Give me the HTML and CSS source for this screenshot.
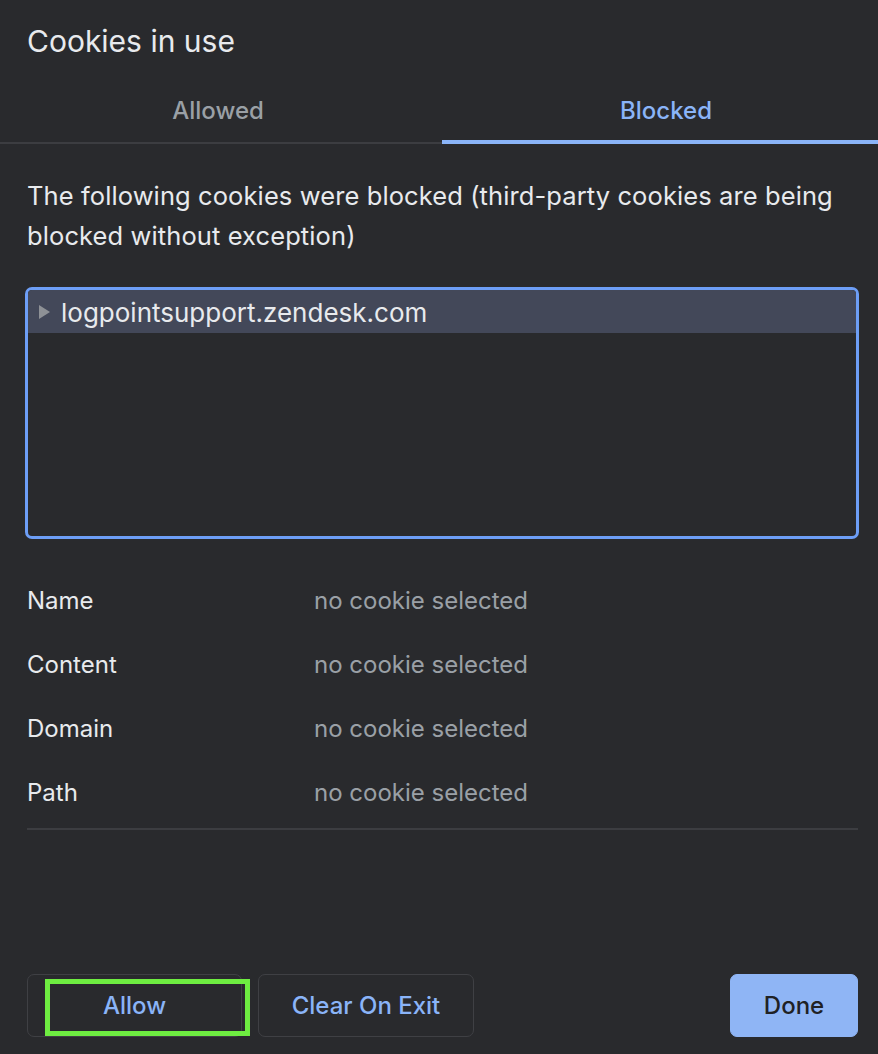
FILE: index.html
```html
<!DOCTYPE html>
<html lang="en">
<head>
<meta charset="utf-8">
<title>Cookies in use</title>
<link rel="stylesheet" href="styles.css">
</head>
<body>
<div class="dialog">
  <h1 class="title">Cookies in use</h1>
  <div class="tabs">
    <div class="tab tab-first">Allowed</div>
    <div class="tab tab-second active">Blocked</div>
  </div>
  <p class="desc">The following cookies were blocked (third-party cookies are being blocked without exception)</p>
  <div class="tree">
    <div class="tree-row">
      <svg class="caret" width="11" height="14" viewBox="0 0 11 14"><path d="M0 0 L11 7 L0 14 Z" fill="#8e9196"/></svg>
      <span>logpointsupport.zendesk.com</span>
    </div>
  </div>
  <div class="details">
    <div class="label">Name</div><div class="value">no cookie selected</div>
    <div class="label">Content</div><div class="value">no cookie selected</div>
    <div class="label">Domain</div><div class="value">no cookie selected</div>
    <div class="label">Path</div><div class="value">no cookie selected</div>
  </div>
  <div class="separator"></div>
  <div class="footer">
    <div class="left-buttons">
      <button class="btn btn-allow">Allow<span class="focus-box"></span></button>
      <button class="btn btn-clear">Clear On Exit</button>
    </div>
    <button class="btn btn-done">Done</button>
  </div>
</div>
</body>
</html>
```

FILE: styles.css
```css
* { box-sizing: border-box; }
html, body {
  margin: 0;
  padding: 0;
  background: #292a2d;
}
body {
  font-family: "Inter", "Noto Sans", sans-serif;
  color: #e8eaed;
}
.dialog {
  width: 878px;
  height: 1054px;
  display: flex;
  flex-direction: column;
}
.title {
  margin: 0;
  padding: 23px 0 13px 27px;
  font-size: 30px;
  line-height: 36px;
  font-weight: 400;
  color: #e8eaed;
}
.tabs {
  display: grid;
  grid-template-columns: 442px 1fr;
}
.tab {
  padding: 24px 0 18px;
  font-size: 24px;
  line-height: 30px;
  font-weight: 500;
  text-align: center;
  color: #9aa0a6;
  box-shadow: inset 0 -2px 0 #3c3d41;
}
.tab-first { padding-right: 6px; }
.tab-second { padding-left: 12px; }
.tab.active {
  color: #8ab4f8;
  box-shadow: inset 0 -4px 0 #8ab4f8;
}
.desc {
  margin: 32px 20px 0 27px;
  font-size: 25.5px;
  line-height: 40px;
  letter-spacing: 0.1px;
}
.tree {
  margin: 31px 19px 0 25px;
  height: 252px;
  border: 3px solid #6d9ef6;
  border-radius: 7px;
  overflow: hidden;
}
.tree-row {
  height: 43px;
  padding-top: 2px;
  background: #434859;
  display: flex;
  align-items: center;
  gap: 11px;
  padding-left: 11px;
  font-size: 26px;
  line-height: 41px;
  color: #e8eaed;
}
.caret { flex: none; margin-top: -2px; }
.details {
  margin: 30px 20px 0 27px;
  display: grid;
  grid-template-columns: 287px 1fr;
  grid-auto-rows: 64px;
  align-items: center;
  font-size: 24px;
  line-height: 30px;
}
.label { color: #e8eaed; }
.value { color: #9aa0a6; }
.separator {
  margin: 3px 20px 0 27px;
  height: 2px;
  background: #3c3d41;
}
.footer {
  margin-top: auto;
  padding: 0 20px 17px 27px;
  display: flex;
  justify-content: space-between;
  align-items: center;
}
.left-buttons {
  display: flex;
  gap: 16px;
}
.btn {
  height: 63px;
  border-radius: 7px;
  font-family: "Inter", "Noto Sans", sans-serif;
  font-size: 24px;
  font-weight: 500;
  background: transparent;
  border: 1px solid #3f4044;
  color: #8ab4f8;
  padding: 0;
  cursor: pointer;
}
.btn-allow {
  width: 215px;
  position: relative;
}
.btn-clear { width: 216px; }
.btn-done {
  width: 128px;
  background: #8fb5f5;
  border-color: #8fb5f5;
  color: #202124;
}
.focus-box {
  position: absolute;
  left: 17px;
  top: 4px;
  width: 205px;
  height: 57px;
  border: 5px solid #6eed41;
}
```
